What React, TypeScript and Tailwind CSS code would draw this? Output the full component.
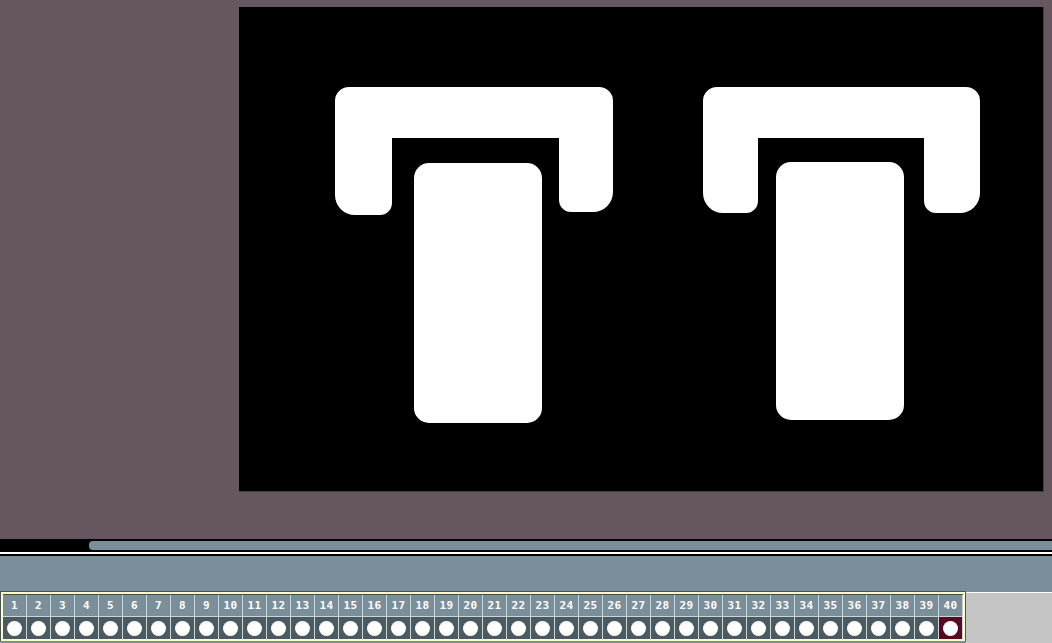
import React from "react";

function tPath(L: number, R: number, top: number, barB: number, li: number, ri: number, lb: number, rb: number) {
  const r = 14;
  const ro = 20;
  const rin = 12;
  return [
    `M ${L + r} ${top}`,
    `H ${R - r}`,
    `A ${r} ${r} 0 0 1 ${R} ${top + r}`,
    `V ${rb - ro}`,
    `A ${ro} ${ro} 0 0 1 ${R - ro} ${rb}`,
    `H ${ri + rin}`,
    `A ${rin} ${rin} 0 0 1 ${ri} ${rb - rin}`,
    `V ${barB}`,
    `H ${li}`,
    `V ${lb - rin}`,
    `A ${rin} ${rin} 0 0 1 ${li - rin} ${lb}`,
    `H ${L + ro}`,
    `A ${ro} ${ro} 0 0 1 ${L} ${lb - ro}`,
    `V ${top + r}`,
    `A ${r} ${r} 0 0 1 ${L + r} ${top}`,
    "Z",
  ].join(" ");
}

function Canvas() {
  return (
    <svg width="804" height="484" viewBox="0 0 804 484" className="block">
      <rect width="804" height="484" fill="#000" />
      <path d={tPath(96, 374, 80, 131, 153, 320, 208, 205)} fill="#fff" />
      <rect x="175" y="156" width="128" height="260" rx="15" fill="#fff" />
      <path d={tPath(464, 741, 80, 131, 519, 685, 206, 206)} fill="#fff" />
      <rect x="537" y="155" width="128" height="258" rx="15" fill="#fff" />
    </svg>
  );
}

export default function App() {
  const cells = Array.from({ length: 40 }, (_, i) => i + 1);
  return (
    <div className="w-[1052px] h-[643px] overflow-hidden flex flex-col bg-[#66565f]">
      <div className="h-[539px] shrink-0 pt-[7px] pl-[239px]">
        <div className="w-[805px] h-[485px] bg-black border-r border-b border-[#3a4630]">
          <Canvas />
        </div>
      </div>
      <div className="h-[13px] shrink-0 bg-black pt-[2px] pl-[89px]">
        <div className="h-[9px] bg-[#7b8f9b] rounded-l-[4px]" />
      </div>
      <div className="h-[2px] shrink-0 bg-white" />
      <div className="h-[2px] shrink-0 bg-black" />
      <div className="h-[35px] shrink-0 bg-[#7b8f9b]" />
      <div className="flex flex-1 bg-[#7b8f9b]">
        <div className="border border-[#46545c] border-b-0 self-start">
          <div className="border-2 border-[#fdfdc4] flex">
            {cells.map((n) => (
              <div key={n} className="w-[24px] flex flex-col bg-[#c8d6de]">
                <div className="h-[1px] bg-[#3f4c54]" />
                <div
                  className="h-[21px] mr-px bg-[#7b8f9b] flex items-center justify-center text-white text-[11px] font-bold leading-none tracking-[0.5px]"
                  style={{ fontFamily: '"DejaVu Sans Mono", monospace' }}
                >
                  {n}
                </div>
                <div className="h-[1px]" />
                <div
                  className={
                    "h-[22px] mr-px flex items-center justify-center " +
                    (n === 40 ? "bg-[#5a0822]" : "bg-[#4b5961]")
                  }
                >
                  <div className="w-[15px] h-[15px] rounded-full bg-white" />
                </div>
              </div>
            ))}
          </div>
        </div>
        <div className="flex-1 mt-[1px] border-t border-white bg-[#c5c5c5]" />
      </div>
    </div>
  );
}
